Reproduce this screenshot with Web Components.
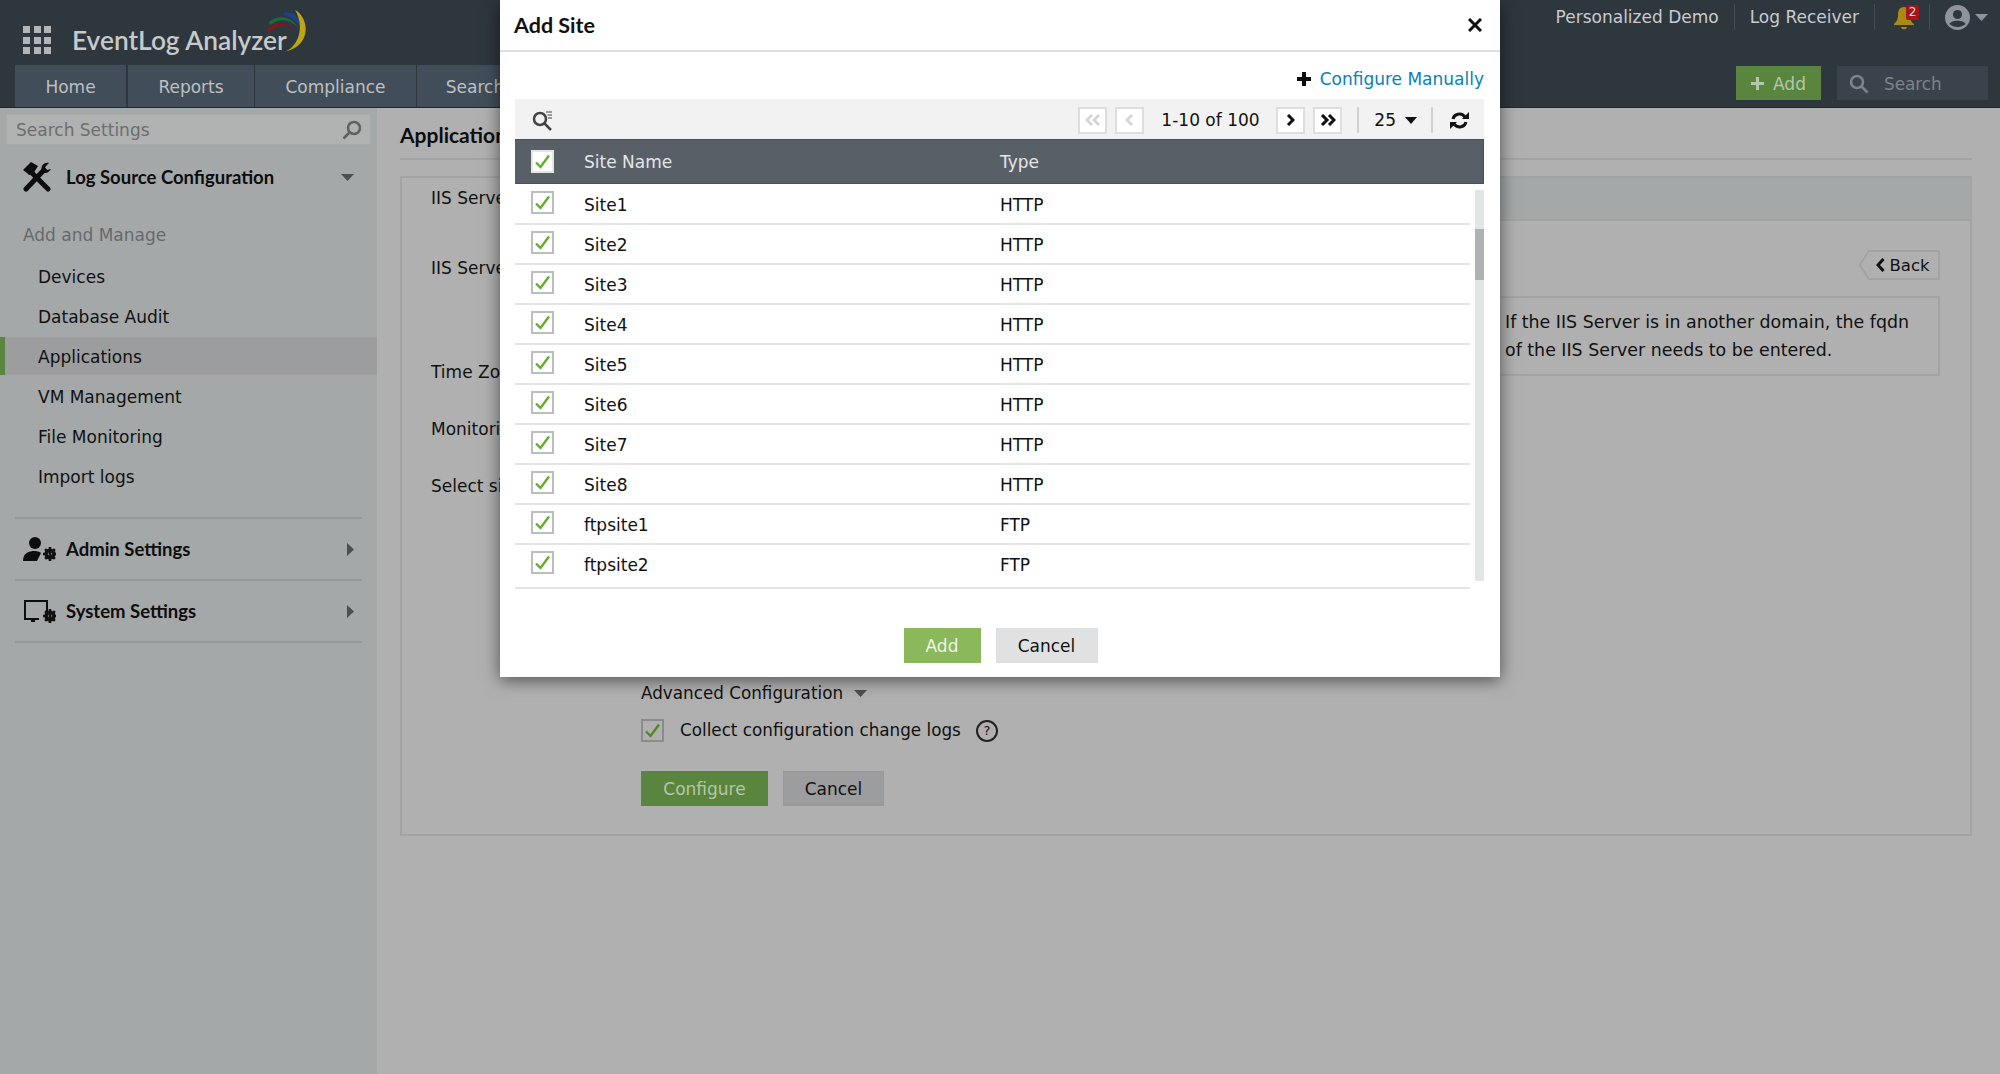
<!DOCTYPE html>
<html lang="en">
<head>
<meta charset="utf-8">
<title>EventLog Analyzer - Add Site</title>
<style>
  html, body { margin: 0; height: 100%; overflow: hidden; background: #b0b0b0; }
  body { font: 17px "DejaVu Sans", Verdana, sans-serif; color: #111; }
</style>
</head>
<body>
<eva-app>
  <eva-header slot="header"></eva-header>
  <eva-sidebar slot="sidebar"></eva-sidebar>
  <eva-content slot="content"></eva-content>
</eva-app>
<eva-modal></eva-modal>

<script>
// Green tick box, used in the modal table and in the page form
class EvaCheck extends HTMLElement {
  constructor() {
    super();
    this.attachShadow({ mode: 'open' });
    this.shadowRoot.innerHTML = `
      <style>
        :host { display: block; width: 23px; height: 23px; box-sizing: border-box; border: 2px solid var(--check-border, #bcbdbe); background: var(--check-bg, #fff); }
        svg { display: block; width: 19px; height: 19px; }
      </style>
      <svg viewBox="0 0 19 19"><path d="M3 10.5l4.5 4.5L16 3.5" fill="none" stroke="var(--check-color, #62ae2c)" stroke-width="2.4"/></svg>`;
  }
}
customElements.define('eva-check', EvaCheck);

// Flat button, colours come from custom properties
class EvaButton extends HTMLElement {
  constructor() {
    super();
    this.attachShadow({ mode: 'open' });
    this.shadowRoot.innerHTML = `
      <style>
        :host { display: inline-flex; align-items: center; justify-content: center; height: 35px; padding-top: 1px; box-sizing: border-box; font-size: 17px; border: 1px solid var(--btn-border, #ddd); border-bottom-width: 2px; background: var(--btn-bg, #e0e1e2); color: var(--btn-color, #111); }
      </style>
      <slot></slot>`;
  }
}
customElements.define('eva-button', EvaButton);

// Top bar: logo row and tabs row
class EvaHeader extends HTMLElement {
  constructor() {
    super();
    this.attachShadow({ mode: 'open' });
    this.tabs = [['Home', 111], ['Reports', 126], ['Compliance', 161], ['Search', 116]];
  }

  connectedCallback() {
    this.shadowRoot.innerHTML = `
      <style>
        :host { display: flex; flex-direction: column; height: 108px; box-sizing: border-box; background: #2e363e; border-bottom: 1px solid #22282e; color: #c9cbcd; }
        .top { display: flex; height: 65px; }
        .apps { width: 28px; height: 28px; margin: 26px 21px 0 23px; display: grid; grid-template-columns: repeat(3, 7px); grid-auto-rows: 7px; gap: 3.5px; }
        .apps i { background: #b3b5b6; }
        .brand { position: relative; font: 600 26.3px Lato, sans-serif; color: #c8c9ca; padding-top: 24px; width: 240px; }
        .brand svg { position: absolute; left: 195px; top: 8px; }
        .links { margin-left: auto; display: flex; align-items: flex-start; height: 30px; padding-top: 4px; font-size: 17px; }
        .links span { padding: 0 15px; height: 26px; box-sizing: border-box; line-height: 26px; border-right: 1px solid #444d55; }
        .bell { width: 54px; height: 26px; border-right: 1px solid #444d55; position: relative; }
        .bell svg { position: absolute; left: 18px; top: 2px; }
        .bell b { position: absolute; left: 31px; top: 1px; width: 13px; height: 15px; background: #a8141b; color: #ddd; border-radius: 2px; font: 400 12px/15px "DejaVu Sans", sans-serif; text-align: center; }
        .user { display: flex; align-items: center; gap: 5px; margin: 0 12px 0 15px; height: 26px; }
        .bottom { display: flex; height: 42px; padding-left: 15px; gap: 1px; }
        .tab { box-sizing: border-box; display: flex; align-items: center; justify-content: center; padding-top: 2px; background: #414e59; font-size: 17px; color: #bcc0c3; }
        .tab:first-child { margin-right: 1px; }
        .add { margin: 1px 0 0 auto; width: 85px; height: 34px; box-sizing: border-box; background: #5a853e; display: flex; align-items: center; justify-content: center; gap: 9px; padding-top: 1px; color: #b6c6a9; font-size: 17px; }
        .search { margin: 1px 12px 0 15px; width: 151px; height: 34px; background: #3a434b; display: flex; align-items: center; gap: 15px; padding: 1px 0 0 12px; box-sizing: border-box; color: #7d8489; font-size: 16.8px; }
      </style>
      <div class="top">
        <div class="apps">${'<i></i>'.repeat(9)}</div>
        <div class="brand">EventLog Analyzer
          <svg width="46" height="46" viewBox="0 0 46 46" fill="none">
            <path d="M0 22C8 12 22 13 29 25C23 16 10 15 2 25Z" fill="#8a161c"/>
            <path d="M2 14C12 5 27 9 33 23C26 11 13 9 3 17Z" fill="#1f6a3a"/>
            <path d="M18 4C30 4 38 14 36 30C33 17 28 9 16 7Z" fill="#1c4384"/>
            <path d="M28 2C42 9 46 38 17 44C32 39 38 18 28 2Z" fill="#bfa417"/>
          </svg>
        </div>
        <div class="links">
          <span>Personalized Demo</span><span>Log Receiver</span>
          <div class="bell">
            <svg width="22" height="24" viewBox="0 0 22 24"><path d="M11 1C6 1 5 5 5 9C5 14 3 16 1 18V19H21V18C18 16 17 14 17 9C17 5 16 1 11 1ZM8 21H14C14 24 8 24 8 21Z" fill="#a98a12"/></svg>
            <b>2</b>
          </div>
          <div class="user">
            <svg width="25" height="25" viewBox="0 0 25 25"><circle cx="12.5" cy="12.5" r="12.5" fill="#8f9499"/><circle cx="12.5" cy="9.5" r="4.5" fill="#2e363e"/><path d="M4.5 19C6 14.5 19 14.5 20.5 19C16 23 9 23 4.5 19Z" fill="#2e363e"/></svg>
            <svg width="13" height="7" viewBox="0 0 13 7"><path d="M0 0H13L6.500 7Z" fill="#8f9499"/></svg>
          </div>
        </div>
      </div>
      <div class="bottom">
        ${this.tabs.map(t => `<div class="tab" style="width:${t[1]}px">${t[0]}</div>`).join('')}
        <div class="add">
          <svg width="13" height="13" viewBox="0 0 13 13"><path d="M5 0H8V5H13V8H8V13H5V8H0V5H5Z" fill="#b6c6a9"/></svg>
          <span>Add</span>
        </div>
        <div class="search">
          <svg width="20" height="20" viewBox="0 0 20 20" fill="none" stroke="#7d8489" stroke-width="2.500"><circle cx="8" cy="8" r="6"/><path d="M12.500 12.500L18.500 18.500"/></svg>
          <span>Search</span>
        </div>
      </div>`;
  }
}
customElements.define('eva-header', EvaHeader);

// Left menu
class EvaSidebar extends HTMLElement {
  constructor() {
    super();
    this.attachShadow({ mode: 'open' });
    this.items = ['Devices', 'Database Audit', 'Applications', 'VM Management', 'File Monitoring', 'Import logs'];
  }

  connectedCallback() {
    const gear = `<g transform="translate(22 18)"><circle r="4" fill="none" stroke="#111" stroke-width="3.200"/><path d="M-1.300-7H1.300V7H-1.300ZM-7-1.300V1.300H7V-1.300ZM-5.800-4L-4-5.800L5.800 4L4 5.800ZM4-5.800L5.800-4L-4 5.800L-5.800 4Z" fill="#111"/></g>`;
    this.shadowRoot.innerHTML = `
      <style>
        :host { display: flex; flex-direction: column; background: #a4a8a9; padding-top: 6px; height: 100%; box-sizing: border-box; }
        .find { margin: 0 6px; height: 31px; background: #b0b2b2; border: 1px solid #a9abab; box-sizing: border-box; display: flex; align-items: center; justify-content: space-between; padding: 0 8px 0 9px; color: #6c6e6f; font-size: 17px; }
        .section { display: flex; align-items: center; height: 38px; margin: 0 15px; padding-left: 8px; font: 700 18.500px Lato, sans-serif; color: #0d0d0d; }
        .section svg.ic { flex: none; width: 33px; margin-right: 10px; }
        .section .arrow { margin-left: auto; margin-right: 8px; }
        .first { margin-top: 13px; }
        .title { margin: 27px 0 0 23px; height: 24px; line-height: 24px; color: #666a6b; font-size: 17px; }
        .menu { margin-top: 10px; margin-bottom: 20px; }
        .item { height: 40px; line-height: 40px; padding-left: 38px; font-size: 17px; color: #111; box-sizing: border-box; }
        .item.on { background: #9c9d9f; box-shadow: inset 5px 0 #5a853e; height: 38px; margin: 0 0 2px; line-height: 41px; }
        .line { height: 2px; background: #95999a; margin: 0 15px; }
        .group { height: 60px; }
      </style>
      <div class="find">
        <span>Search Settings</span>
        <svg width="20" height="20" viewBox="0 0 20 20" fill="none" stroke="#5f6161" stroke-width="2.500"><circle cx="12" cy="8" r="6"/><path d="M7.500 12.500L1.500 18.500"/></svg>
      </div>
      <div class="section first">
        <svg class="ic" width="28" height="31" viewBox="0 0 28 31" style="width:28px;margin-right:15px">
          <path d="M7 9L25 27" stroke="#0d0d0d" stroke-width="5" stroke-linecap="round"/>
          <path d="M0 8L8 0L15 4L10 12L6 13L4 11Z" fill="#0d0d0d"/>
          <path d="M21 8L3 27" stroke="#0d0d0d" stroke-width="5" stroke-linecap="round"/>
          <path d="M26 1C22 0 17 3 19 9C21 12 25 12 28 7L24 8L22 6L23 4Z" fill="#0d0d0d"/>
        </svg>
        <span>Log Source Configuration</span>
        <svg class="arrow" width="13" height="7" viewBox="0 0 13 7"><path d="M0 0H13L6.500 7Z" fill="#4c4e4f"/></svg>
      </div>
      <div class="title">Add and Manage</div>
      <div class="menu">
        ${this.items.map(i => `<div class="item${i === 'Applications' ? ' on' : ''}">${i}</div>`).join('')}
      </div>
      <div class="line"></div>
      <div class="section group">
        <svg class="ic" width="33" height="27" viewBox="0 0 33 27">
          <circle cx="12" cy="7" r="6" fill="#0d0d0d"/><path d="M0 25C0 17 6 15 12 15C15 15 17 16 18 17L14 25Z" fill="#0d0d0d"/>
          <g transform="translate(5 0)">${gear}</g>
        </svg>
        <span>Admin Settings</span>
        <svg class="arrow" width="7" height="13" viewBox="0 0 7 13"><path d="M0 0V13L7 6.500Z" fill="#4c4e4f"/></svg>
      </div>
      <div class="line"></div>
      <div class="section group">
        <svg class="ic" width="33" height="24" viewBox="0 0 33 24">
          <path d="M1 1H25V13H23V3H3V19H16V21H12V23H8V21H1Z" fill="#0d0d0d"/>
          <g transform="translate(5 -1)">${gear}</g>
        </svg>
        <span>System Settings</span>
        <svg class="arrow" width="7" height="13" viewBox="0 0 7 13"><path d="M0 0V13L7 6.500Z" fill="#4c4e4f"/></svg>
      </div>
      <div class="line"></div>`;
  }
}
customElements.define('eva-sidebar', EvaSidebar);

// The form behind the dialog
class EvaContent extends HTMLElement {
  constructor() {
    super();
    this.attachShadow({ mode: 'open' });
    this.shadowRoot.innerHTML = `
      <style>
        :host { display: block; padding: 0 28px 0 23px; color: #111; font-size: 17px; }
        h1 { margin: 0; height: 52px; box-sizing: border-box; padding-top: 14px; font: 700 21px Lato, sans-serif; color: #0d0d0d; border-bottom: 2px solid #a2a3a3; }
        .panel { margin-top: 16px; height: 660px; box-sizing: border-box; border: 2px solid #a2a3a3; display: flex; flex-direction: column; }
        .band { height: 41px; flex: none; background: #a4a8a9; border-bottom: 2px solid #a2a3a3; display: flex; }
        .band span { width: 200px; height: 43px; padding: 0 0 0 29px; box-sizing: border-box; background: #b0b0b0; line-height: 41px; }
        .body { flex: 1; display: grid; grid-template-columns: 239px 1fr; }
        .labels { padding-left: 29px; }
        .labels div { height: 0; position: relative; }
        .l1 { margin-top: 36px; } .l2 { margin-top: 104px; } .l3 { margin-top: 57px; } .l4 { margin-top: 57px; }
        .labels span { display: block; line-height: 22px; }
        .main { display: flex; flex-direction: column; padding-right: 30px; }
        .back { align-self: flex-end; margin-top: 29px; width: 72px; height: 30px; box-sizing: border-box; border: 2px solid #a2a3a3; border-left: none; position: relative; display: flex; align-items: center; justify-content: center; gap: 4px; font-size: 16.5px; }
        .back svg.tip { position: absolute; left: -10px; top: -2px; }
        .note { margin-top: 16px; height: 80px; box-sizing: border-box; border: 2px solid #a2a3a3; padding: 10px 0 0 862px; line-height: 28px; font-size: 17.4px; white-space: nowrap; }
        .form { margin-top: 305px; display: flex; flex-direction: column; align-items: flex-start; font-size: 16.8px; }
        .adv { display: flex; align-items: center; gap: 11px; height: 24px; }
        .logs { display: flex; align-items: center; margin-top: 13px; height: 24px; }
        .logs span { margin: 0 15px 0 16px; }
        .logs eva-check { --check-bg: #b0b0b0; --check-border: #8a8b8b; --check-color: #4f8a24; }
        .help { width: 22px; height: 22px; box-sizing: border-box; border: 2px solid #222; border-radius: 50%; text-align: center; font-size: 13px; line-height: 18px; margin-top: 2px; }
        .acts { display: flex; gap: 15px; margin-top: 29px; }
      </style>
      <h1>Applications</h1>
      <div class="panel">
        <div class="band"><span>IIS Server</span></div>
        <div class="body">
          <div class="labels">
            <div class="l1"><span>IIS Server</span></div>
            <div class="l2"><span>Time Zone</span></div>
            <div class="l3"><span>Monitoring</span></div>
            <div class="l4"><span>Select sites</span></div>
          </div>
          <div class="main">
            <div class="back">
              <svg class="tip" width="11" height="30" viewBox="0 0 11 30"><path d="M11 1L1.500 15L11 29" fill="none" stroke="#a2a3a3" stroke-width="2"/></svg>
              <svg width="9" height="14" viewBox="0 0 9 14"><path d="M7.500 1L2 7L7.500 13" fill="none" stroke="#111" stroke-width="3"/></svg>
              <span>Back</span>
            </div>
            <div class="note">If the IIS Server is in another domain, the fqdn<br>of the IIS Server needs to be entered.</div>
            <div class="form">
              <div class="adv">
                <span>Advanced Configuration</span>
                <svg width="13" height="7" viewBox="0 0 13 7"><path d="M0 0H13L6.500 7Z" fill="#4c4e4f"/></svg>
              </div>
              <div class="logs">
                <eva-check></eva-check>
                <span>Collect configuration change logs</span>
                <div class="help">?</div>
              </div>
              <div class="acts">
                <eva-button style="width:127px;--btn-bg:#5a853e;--btn-border:#5a853e;--btn-color:#b6c6a9">Configure</eva-button>
                <eva-button style="width:101px;--btn-bg:#9b9d9e;--btn-border:#999">Cancel</eva-button>
              </div>
            </div>
          </div>
        </div>
      </div>`;
  }
}
customElements.define('eva-content', EvaContent);

// Outer grid of the page
class EvaApp extends HTMLElement {
  constructor() {
    super();
    this.attachShadow({ mode: 'open' });
    this.shadowRoot.innerHTML = `
      <style>
        :host { display: grid; grid-template-columns: 377px 1fr; grid-template-rows: 108px 1fr; height: 1074px; background: #b0b0b0; }
        ::slotted([slot=header]) { grid-column: 1 / 3; }
      </style>
      <slot name="header"></slot>
      <slot name="sidebar"></slot>
      <slot name="content"></slot>`;
  }
}
customElements.define('eva-app', EvaApp);

// Add Site dialog, lies over the page
class EvaModal extends HTMLElement {
  constructor() {
    super();
    this.attachShadow({ mode: 'open' });
    this.sites = [
      ['Site1', 'HTTP'], ['Site2', 'HTTP'], ['Site3', 'HTTP'], ['Site4', 'HTTP'], ['Site5', 'HTTP'],
      ['Site6', 'HTTP'], ['Site7', 'HTTP'], ['Site8', 'HTTP'], ['ftpsite1', 'FTP'], ['ftpsite2', 'FTP'],
    ];
  }

  connectedCallback() {
    this.shadowRoot.innerHTML = `
      <style>
        :host { position: absolute; left: 500px; top: 0; width: 1000px; height: 677px; background: #fff; box-shadow: 0 3px 16px rgba(0,0,0,.55); display: flex; flex-direction: column; color: #111; font-size: 17px; }
        .head { height: 52px; box-sizing: border-box; flex: none; border-bottom: 2px solid #dedede; display: flex; align-items: center; justify-content: space-between; padding: 0 18px 0 14px; font: 700 21.5px Lato, sans-serif; color: #111; }
        .wrap { padding: 0 16px 0 15px; }
        .cfg { height: 47px; display: flex; align-items: center; justify-content: flex-end; gap: 9px; color: #0a7fb8; padding-top: 6px; box-sizing: border-box; }
        .bar { height: 40px; box-sizing: border-box; padding: 2px 15px 0 17px; background: #f2f2f2; display: flex; align-items: center; }
        .pg { width: 29px; height: 27px; box-sizing: border-box; border: 2px solid #dedede; background: #fff; display: flex; align-items: center; justify-content: center; }
        .count { margin: 0 16px 0 17px; width: 99px; white-space: nowrap; }
        .sep { width: 2px; height: 26px; background: #d2d2d2; }
        .row { display: flex; align-items: center; height: 40px; box-sizing: border-box; padding-left: 16px; }
        .row eva-check { flex: none; margin-right: 30px; margin-top: -3px; }
        .name { width: 416px; }
        .row > div { padding-top: 2px; }
        .thead { height: 45px; background: #585f67; color: #e4e6e7; border: 1px solid #4a5058; border-width: 1px 1px 1px 0; margin-top: 0; }
        .thead > div { padding-top: 0; }
        .thead eva-check { --check-border: #e6e6e6; margin-top: 0; }
        .rows { position: relative; }
        .site { margin-right: 14px; border-bottom: 2px solid #e4e4e4; }
        .site:first-child { height: 41px; }
        .site:nth-child(10) { height: 44px; padding-bottom: 4px; }
        .track { position: absolute; right: 0; top: 6px; width: 9px; height: 391px; background: #e4e6e6; }
        .thumb { position: absolute; top: 39px; left: 0; width: 9px; height: 51px; background: #aeb2b3; }
        .foot { display: flex; justify-content: center; gap: 15px; margin-top: 39px; padding-left: 2px; }
      </style>
      <div class="head">
        <span>Add Site</span>
        <svg width="14" height="14" viewBox="0 0 14 14"><path d="M1 1L13 13M13 1L1 13" stroke="#111" stroke-width="3"/></svg>
      </div>
      <div class="wrap">
        <div class="cfg">
          <svg width="14" height="14" viewBox="0 0 14 14"><path d="M5 0H9V5H14V9H9V14H5V9H0V5H5Z" fill="#0d0d0d"/></svg>
          <span>Configure Manually</span>
        </div>
        <div class="bar">
          <svg width="21" height="21" viewBox="0 0 21 21" fill="none" stroke="#444" stroke-width="2.500"><circle cx="8" cy="9" r="6"/><path d="M12.500 13.500L19 20"/><path d="M14 2H20M15.500 5H20M16 8H20" stroke-width="1.200"/></svg>
          <div style="flex:1"></div>
          <div class="pg"><svg width="16" height="12" viewBox="0 0 16 12" fill="none" stroke="#d4d4d4" stroke-width="2.800"><path d="M7 1L2 6L7 11M14 1L9 6L14 11"/></svg></div>
          <div class="pg" style="margin-left:8px"><svg width="9" height="12" viewBox="0 0 9 12" fill="none" stroke="#d4d4d4" stroke-width="2.800"><path d="M7 1L2 6L7 11"/></svg></div>
          <div class="count">1-10 of 100</div>
          <div class="pg"><svg width="9" height="12" viewBox="0 0 9 12" fill="none" stroke="#111" stroke-width="3"><path d="M2 1L7 6L2 11"/></svg></div>
          <div class="pg" style="margin-left:8px"><svg width="16" height="12" viewBox="0 0 16 12" fill="none" stroke="#111" stroke-width="3"><path d="M2 1L7 6L2 11M9 1L14 6L9 11"/></svg></div>
          <div class="sep" style="margin:0 15px"></div>
          <span>25</span>
          <svg style="margin:0 14px 0 9px" width="12" height="7" viewBox="0 0 12 7"><path d="M0 0H12L6 7Z" fill="#111"/></svg>
          <div class="sep"></div>
          <svg style="margin-left:17px" width="19" height="19" viewBox="0 0 19 19" fill="none" stroke="#111" stroke-width="3"><path d="M3 8C4 3 11 1 15 6"/><path d="M16 11C15 16 8 18 4 13"/><path d="M12 8H19V1Z" fill="#111" stroke="none"/><path d="M7 11H0V18Z" fill="#111" stroke="none"/></svg>
        </div>
        <div class="row thead"><eva-check></eva-check><div class="name">Site Name</div><div>Type</div></div>
        <div class="rows">
          ${this.sites.map(s => `<div class="row site"><eva-check></eva-check><div class="name">${s[0]}</div><div>${s[1]}</div></div>`).join('')}
          <div class="track"><div class="thumb"></div></div>
        </div>
        <div class="foot">
          <eva-button style="width:77px;--btn-bg:#8ab85a;--btn-border:#8ab85a;--btn-color:#f1f6ea">Add</eva-button>
          <eva-button style="width:102px">Cancel</eva-button>
        </div>
      </div>`;
  }
}
customElements.define('eva-modal', EvaModal);
</script>
</body>
</html>
